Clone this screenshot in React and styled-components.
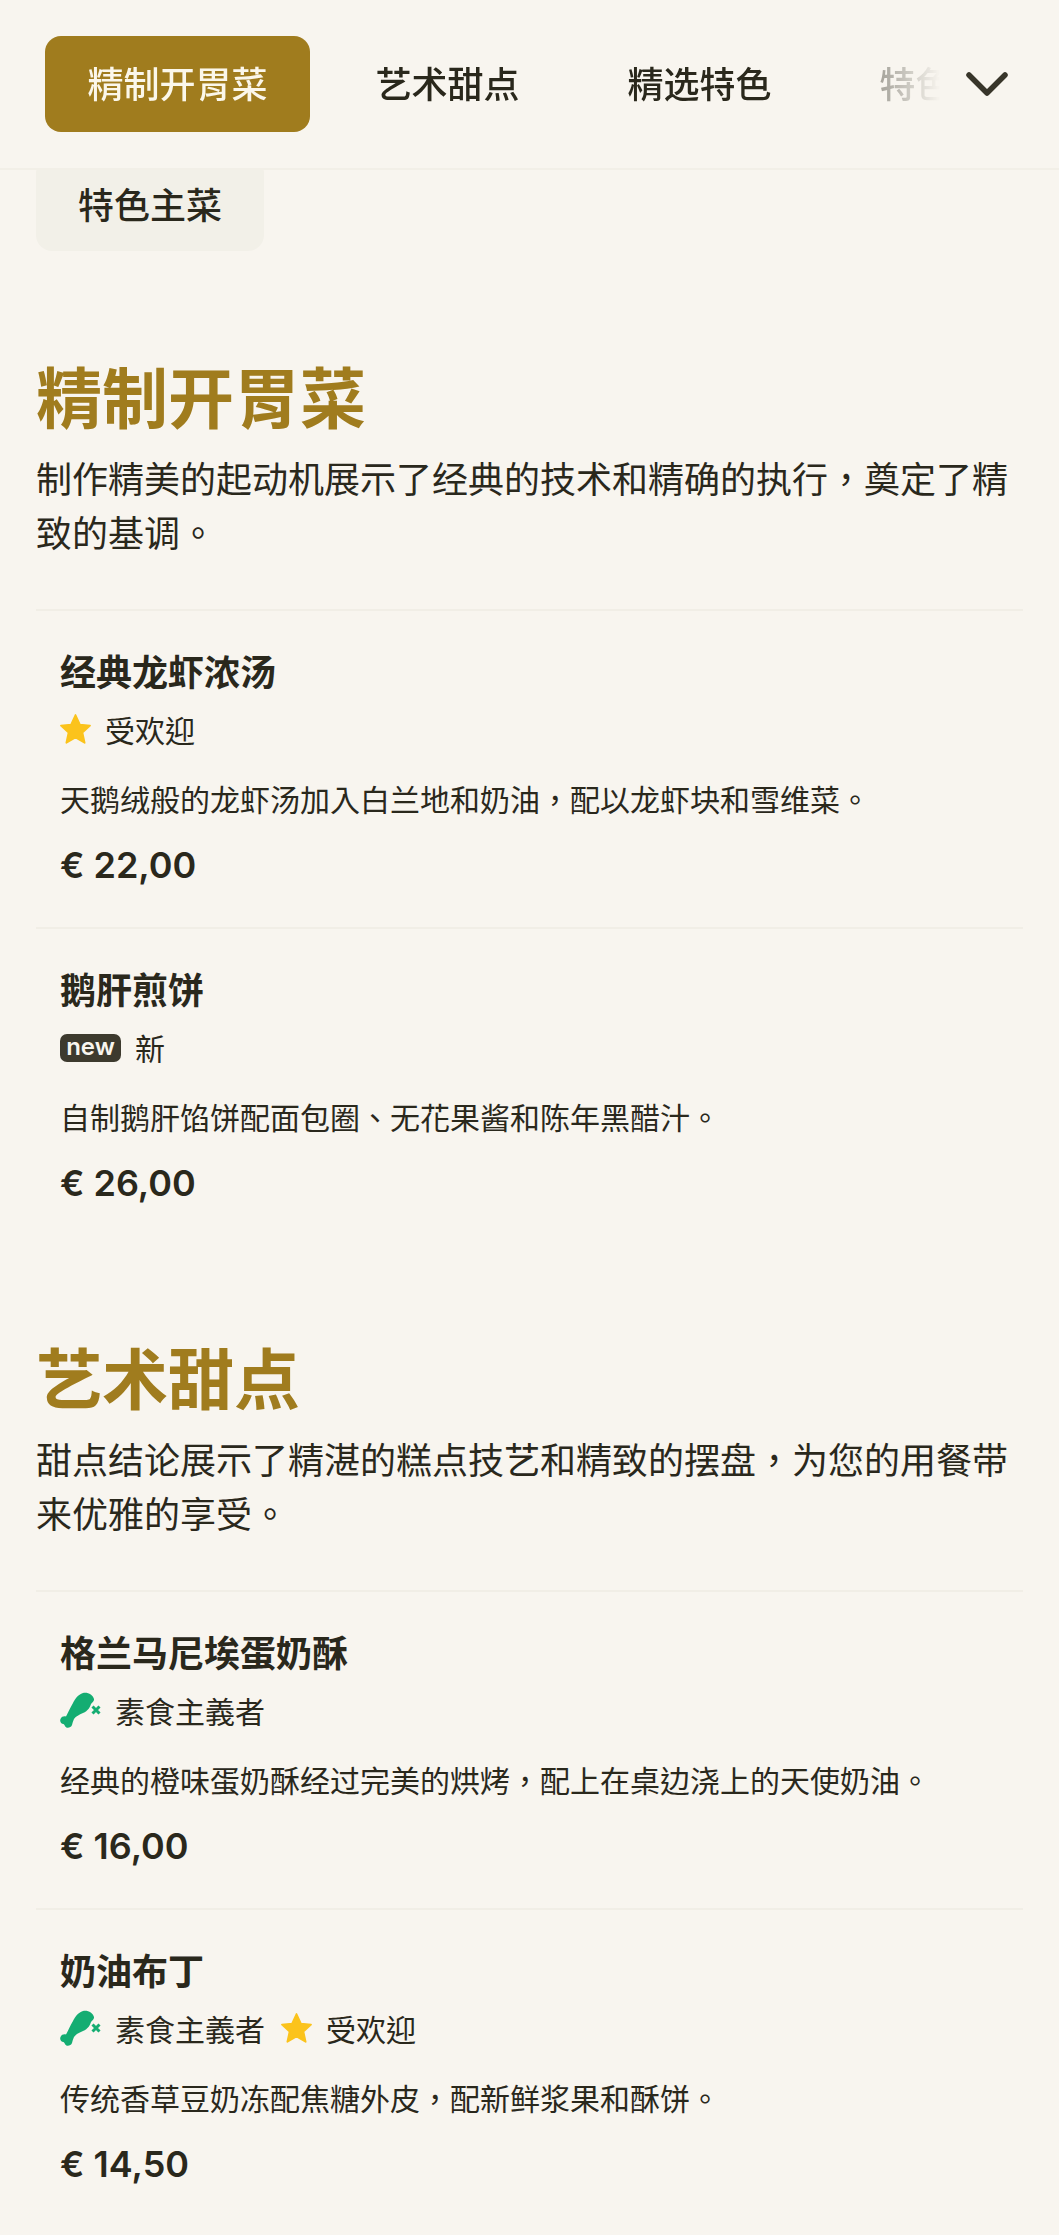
import React from "react";
import styled, { createGlobalStyle } from "styled-components";

const CJK = `"Noto Sans CJK TC", "Noto Sans CJK SC", "Noto Sans", sans-serif`;
const INK = "#2a281c";

const GlobalStyle = createGlobalStyle`
  html, body {
    margin: 0;
    padding: 0;
    background: #f8f5ef;
    color: ${INK};
    font-family: ${CJK};
  }
`;

const Page = styled.div`
  width: 1059px;
  min-height: 2235px;
  overflow: hidden;
`;

const Header = styled.header`
  position: relative;
  z-index: 1;
  display: flex;
  align-items: center;
  height: 168px;
  padding-left: 45px;
  background: #f8f5ef;
  border-bottom: 2px solid #f2efe7;
`;

const TabScroller = styled.nav`
  display: flex;
  gap: 23px;
  width: 900px;
  overflow: hidden;
  mask-image: linear-gradient(to right, #000 790px, rgba(0, 0, 0, 0.4) 835px, transparent 895px);
`;

const Tab = styled.a`
  flex: none;
  display: flex;
  align-items: center;
  box-sizing: border-box;
  height: 96px;
  padding: 0 42.5px 4px;
  border-radius: 16px;
  font-size: 36px;
  font-weight: 500;
  color: ${(p) => (p.$active ? "#fbf7ea" : INK)};
  background: ${(p) => (p.$active ? "#a07c1e" : "transparent")};
`;

const Chevron = styled.svg`
  flex: none;
  width: 44px;
  height: 26px;
  margin-left: 20px;
  fill: none;
  stroke: #38352a;
  stroke-width: 5.5;
  stroke-linecap: round;
  stroke-linejoin: round;
`;

const Chip = styled.div`
  display: flex;
  align-items: center;
  justify-content: center;
  box-sizing: border-box;
  width: 228px;
  height: 94px;
  padding-bottom: 3px;
  margin: -13px 0 0 36px;
  border-radius: 16px;
  background: #f2f0e8;
  font-size: 36px;
  font-weight: 500;
`;

const Sections = styled.main`
  display: flex;
  flex-direction: column;
  gap: 90px;
  padding: 103px 36px 0;
`;

const Heading = styled.h2`
  margin: 0;
  font-size: 66px;
  line-height: 80px;
  font-weight: 700;
  color: #a07c1e;
`;

const Intro = styled.p`
  margin: 16px 0 51px;
  font-size: 36px;
  line-height: 54px;
`;

const Item = styled.article`
  padding: 34px 24px 40px;
  border-top: 2px solid #f1eee6;
`;

const ItemName = styled.h3`
  margin: 0;
  font-size: 36px;
  line-height: 50px;
  font-weight: 700;
`;

const TagRow = styled.div`
  display: flex;
  align-items: center;
  gap: 16px;
  height: 40px;
  margin-top: 14px;
`;

const Tag = styled.span`
  display: flex;
  align-items: center;
  gap: 14px;
  font-size: 30px;
  line-height: 40px;
`;

const NewBadge = styled.span`
  display: flex;
  align-items: center;
  justify-content: center;
  box-sizing: border-box;
  width: 61px;
  height: 28px;
  margin-top: 2px;
  padding-bottom: 3px;
  border-radius: 7px;
  background: #3d3a2e;
  color: #f8f5ef;
  font-family: "Inter", sans-serif;
  font-size: 24px;
  font-weight: 600;
`;

const ItemText = styled.p`
  margin: 27px 0 0;
  font-size: 30px;
  line-height: 44px;
`;

const Price = styled.div`
  margin-top: 23px;
  font-family: "Inter", sans-serif;
  font-size: 36px;
  line-height: 44px;
  font-weight: 600;
`;

const Star = () => (
  <svg width="31" height="30" viewBox="0 0 31 30">
    <path
      d="M15.500 1l4.400 9.600 10.100 1-7.600 6.900 2.200 10.300-9.100-5.300-9.100 5.300 2.200-10.300L1 11.600l10.100-1z"
      fill="#fbc31c"
      stroke="#fbc31c"
      strokeWidth="1.800"
      strokeLinejoin="round"
    />
  </svg>
);

const VeganIcon = () => (
  <svg width="41" height="37" viewBox="0 0 41 37">
    <path
      d="M23 1C28 0 33 3 34 7 34.500 9 32 10.500 31 12 30 15 28 19 23 21 19 23 16 24 14 27 13 29 12.500 31 12 33 11 36 6 37 5 34 4.500 33 4 32.500 3.500 32 1 32-.5 29 .5 27 1.500 24.500 4 24 6 24.500 8 21 10 16 13 11 15 7 18 2.500 23 1Z"
      fill="#14ad72"
    />
    <path d="M32.500 14.500l7 7M39.500 14.500l-7 7" stroke="#14ad72" strokeWidth="3" fill="none" />
  </svg>
);

const menu = [
  {
    title: "精制开胃菜",
    intro: "制作精美的起动机展示了经典的技术和精确的执行，奠定了精致的基调。",
    items: [
      { name: "经典龙虾浓汤", tags: ["popular"], text: "天鹅绒般的龙虾汤加入白兰地和奶油，配以龙虾块和雪维菜。", price: "€ 22,00" },
      { name: "鹅肝煎饼", tags: ["new"], text: "自制鹅肝馅饼配面包圈、无花果酱和陈年黑醋汁。", price: "€ 26,00" },
    ],
  },
  {
    title: "艺术甜点",
    intro: "甜点结论展示了精湛的糕点技艺和精致的摆盘，为您的用餐带来优雅的享受。",
    items: [
      { name: "格兰马尼埃蛋奶酥", tags: ["veg"], text: "经典的橙味蛋奶酥经过完美的烘烤，配上在桌边浇上的天使奶油。", price: "€ 16,00" },
      { name: "奶油布丁", tags: ["veg", "popular"], text: "传统香草豆奶冻配焦糖外皮，配新鲜浆果和酥饼。", price: "€ 14,50" },
    ],
  },
];

const renderTag = (tag) => {
  if (tag === "popular") {
    return (
      <Tag key={tag}>
        <Star />
        受欢迎
      </Tag>
    );
  }
  if (tag === "new") {
    return (
      <Tag key={tag}>
        <NewBadge>new</NewBadge>
        新
      </Tag>
    );
  }
  return (
    <Tag key={tag}>
      <VeganIcon />
      素食主義者
    </Tag>
  );
};

export default function App() {
  return (
    <Page>
      <GlobalStyle />
      <Header>
        <TabScroller>
          <Tab $active>精制开胃菜</Tab>
          <Tab>艺术甜点</Tab>
          <Tab>精选特色</Tab>
          <Tab>特色主菜</Tab>
        </TabScroller>
        <Chevron viewBox="0 0 44 26">
          <path d="M4 4l18 18L40 4" />
        </Chevron>
      </Header>
      <Chip>特色主菜</Chip>
      <Sections>
        {menu.map((section) => (
          <section key={section.title}>
            <Heading>{section.title}</Heading>
            <Intro>{section.intro}</Intro>
            {section.items.map((item) => (
              <Item key={item.name}>
                <ItemName>{item.name}</ItemName>
                <TagRow>{item.tags.map(renderTag)}</TagRow>
                <ItemText>{item.text}</ItemText>
                <Price>{item.price}</Price>
              </Item>
            ))}
          </section>
        ))}
      </Sections>
    </Page>
  );
}
